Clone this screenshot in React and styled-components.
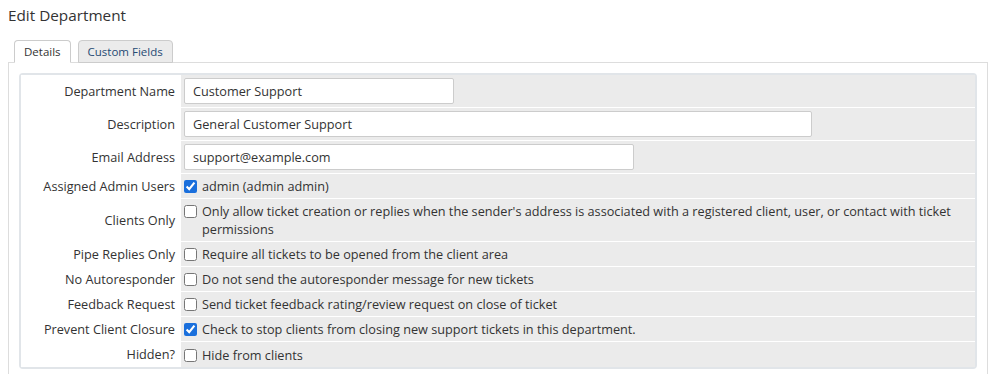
import React from 'react'
import styled, { createGlobalStyle } from 'styled-components'

const GlobalStyle = createGlobalStyle`
  body {
    margin: 0;
    background: #fff;
    font-family: "Open Sans", "Liberation Sans", sans-serif;
    font-size: 12.7px;
    color: #333;
  }
`

const Page = styled.div`
  padding: 5px 8px 0;
`

const Title = styled.h1`
  margin: 0 0 15px;
  font-size: 15.3px;
  line-height: 20px;
  font-weight: 400;
  color: #333;
`

const TabList = styled.ul`
  display: flex;
  gap: 7px;
  margin: 0;
  padding: 0 0 0 6px;
  list-style: none;
  position: relative;
  z-index: 1;
`

const Tab = styled.li`
  box-sizing: border-box;
  height: 23px;
  padding: 0 9px;
  display: flex;
  align-items: center;
  font-size: 11.5px;
  border: 1px solid #ccc;
  border-bottom-color: ${p => (p.$active ? '#fff' : '#ccc')};
  border-radius: 4px 4px 0 0;
  background: ${p => (p.$active ? '#fff' : '#ebebeb')};
  color: ${p => (p.$active ? '#333' : '#264a73')};
  margin-bottom: -1px;
`

const Panel = styled.div`
  border: 1px solid #ddd;
  border-bottom: none;
  padding: 10px;
`

const Table = styled.table`
  width: 100%;
  border-collapse: separate;
  border-spacing: 0;
  border: 2px solid #e1e5e9;
  border-radius: 4px;
`

const Label = styled.td`
  width: 154px;
  padding: 3px 6px 3px 0;
  text-align: right;
  line-height: 18px;
  white-space: nowrap;
  vertical-align: middle;
  background: #fff;
  border-bottom: 1px solid #fff;
`

const Field = styled.td`
  padding: 3px 4px 3px 3px;
  line-height: 18px;
  background: #ebebeb;
  border-bottom: 1px solid #fff;
  vertical-align: middle;
  tr:last-child & {
    border-bottom: none;
  }
`

const TextInput = styled.input`
  display: block;
  box-sizing: border-box;
  width: ${p => p.$w}px;
  height: 26px;
  padding: 0 8px;
  border: 1px solid #ccc;
  border-radius: 2px;
  font-family: inherit;
  font-size: 12.7px;
  color: #333;
  background: #fff;
`

const CheckLabel = styled.label`
  display: flex;
  align-items: flex-start;
  gap: 5px;
`

const Check = styled.input`
  flex: none;
  width: 13px;
  height: 13px;
  margin: 3px 0 0 0;
  accent-color: #1a6fdc;
`

const inputs = [
  ['Department Name', 'Customer Support', 270],
  ['Description', 'General Customer Support', 628],
  ['Email Address', 'support@example.com', 450],
]

const checks = [
  ['Assigned Admin Users', 'admin (admin admin)', true],
  ['Clients Only', "Only allow ticket creation or replies when the sender's address is associated with a registered client, user, or contact with ticket permissions", false],
  ['Pipe Replies Only', 'Require all tickets to be opened from the client area', false],
  ['No Autoresponder', 'Do not send the autoresponder message for new tickets', false],
  ['Feedback Request', 'Send ticket feedback rating/review request on close of ticket', false],
  ['Prevent Client Closure', 'Check to stop clients from closing new support tickets in this department.', true],
  ['Hidden?', 'Hide from clients', false],
]

const App = () => {
  return (
    <Page>
      <GlobalStyle />
      <Title>Edit Department</Title>
      <TabList>
        <Tab $active>Details</Tab>
        <Tab>Custom Fields</Tab>
      </TabList>
      <Panel>
        <Table>
          <tbody>
            {inputs.map(([label, value, w]) => (
              <tr key={label}>
                <Label>{label}</Label>
                <Field>
                  <TextInput defaultValue={value} $w={w} />
                </Field>
              </tr>
            ))}
            {checks.map(([label, text, on]) => (
              <tr key={label}>
                <Label>{label}</Label>
                <Field>
                  <CheckLabel>
                    <Check type="checkbox" defaultChecked={on} />
                    <span>{text}</span>
                  </CheckLabel>
                </Field>
              </tr>
            ))}
          </tbody>
        </Table>
      </Panel>
    </Page>
  )
}

export default App
